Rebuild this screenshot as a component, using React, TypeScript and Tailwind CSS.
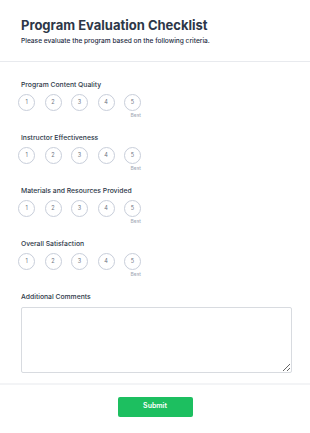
import React from "react";

const criteria = [
  "Program Content Quality",
  "Instructor Effectiveness",
  "Materials and Resources Provided",
  "Overall Satisfaction",
];

function Rating({ label }: { label: string }) {
  return (
    <div className="mb-[14px]">
      <div className="pl-[21px] text-[6.8px] leading-[10px] font-medium text-[#2d3748]">{label}</div>
      <div className="mt-[4px] ml-[18px] flex gap-[9.5px]">
        {[1, 2, 3, 4, 5].map((n) => (
          <div
            key={n}
            className="w-[17px] h-[17px] rounded-full border border-[#c8ceda] flex items-center justify-center text-[5.5px] text-[#6b7280]"
          >
            {n}
          </div>
        ))}
      </div>
      <div className="ml-[18px] w-[123px] mt-[1px] text-right text-[5px] leading-[7px] text-[#a0a7b4]">Best</div>
    </div>
  );
}

export default function App() {
  return (
    <div className="w-[310px] h-[433px] bg-white font-['Inter',sans-serif] overflow-hidden">
      <div className="h-[62px] pt-[16px] pl-[21px] border-b border-[#e8eaee]">
        <div className="text-[13px] leading-[18px] font-bold text-[#2d3748]">Program Evaluation Checklist</div>
        <div className="mt-[2px] text-[6.6px] leading-[10px] font-medium text-[#1f2d45]">
          Please evaluate the program based on the following criteria.
        </div>
      </div>
      <div className="pt-[17.5px]">
        {criteria.map((c) => (
          <Rating key={c} label={c} />
        ))}
        <div className="pl-[21px] text-[6.8px] leading-[10px] font-medium text-[#2d3748]">Additional Comments</div>
        <div className="pl-[21px] pr-[18px] mt-[5px]">
          <textarea className="block w-full h-[66px] border border-[#d8dbe0] rounded-[2px] resize-y" />
        </div>
      </div>
      <div className="mt-[10px] border-t-2 border-[#f3f4f6] pt-[12px] flex justify-center">
        <button className="w-[75px] h-[20px] rounded-[2px] bg-[#1dbf60] text-white text-[7px] font-semibold">
          Submit
        </button>
      </div>
    </div>
  );
}
